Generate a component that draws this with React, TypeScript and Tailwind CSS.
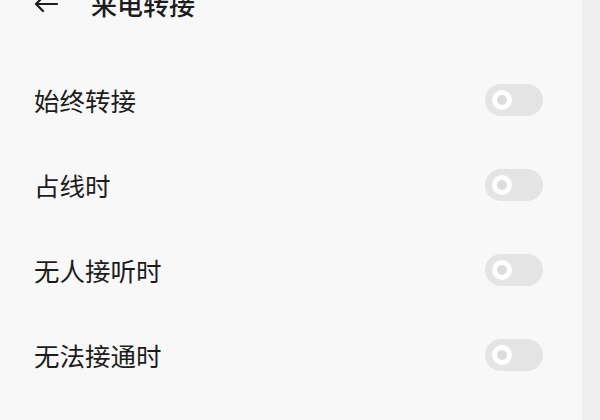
import { useState } from "react";

const rows = ["始终转接", "占线时", "无人接听时", "无法接通时"];

const Toggle = ({ on, onClick }: { on: boolean; onClick: () => void }) => (
    <button
        type="button"
        onClick={onClick}
        className={`flex items-center w-[58px] h-[32px] rounded-full px-[7px] ${on ? "bg-[#2f7cf6] justify-end" : "bg-[#e4e4e4] justify-start"}`}
    >
        <span className="block w-[20px] h-[20px] rounded-full border-[5px] border-white bg-[#dcdcdc]" />
    </button>
);

const App = () => {
    const [states, setStates] = useState(rows.map(() => false));

    return (
        <div className="flex w-[600px] h-[420px] overflow-hidden bg-[#f8f8f8] font-['Noto_Sans_CJK_SC',sans-serif] text-[#1c1c1c]">
            <div className="flex flex-col flex-1">
                <div className="flex items-center h-[28px] -mt-[10px] pl-[33px] gap-[32px]">
                    <svg width="26" height="20" viewBox="0 0 26 20" fill="none" stroke="#1c1c1c" strokeWidth="2.2" strokeLinecap="round" strokeLinejoin="round">
                        <path d="M24 10H3M10 3L3 10l7 7" />
                    </svg>
                    <span className="text-[26px] font-medium leading-none">来电转接</span>
                </div>
                <div className="flex flex-col mt-[39px]">
                    {rows.map((label, i) => (
                        <div key={label} className="flex items-center justify-between h-[85px] pl-[34px] pr-[39px]">
                            <span className="text-[25.5px] leading-none">{label}</span>
                            <Toggle
                                on={states[i]}
                                onClick={() => setStates(states.map((s, j) => (j === i ? !s : s)))}
                            />
                        </div>
                    ))}
                </div>
            </div>
            <div className="w-[18px] bg-[#efefef]" />
        </div>
    );
};

export default App;
